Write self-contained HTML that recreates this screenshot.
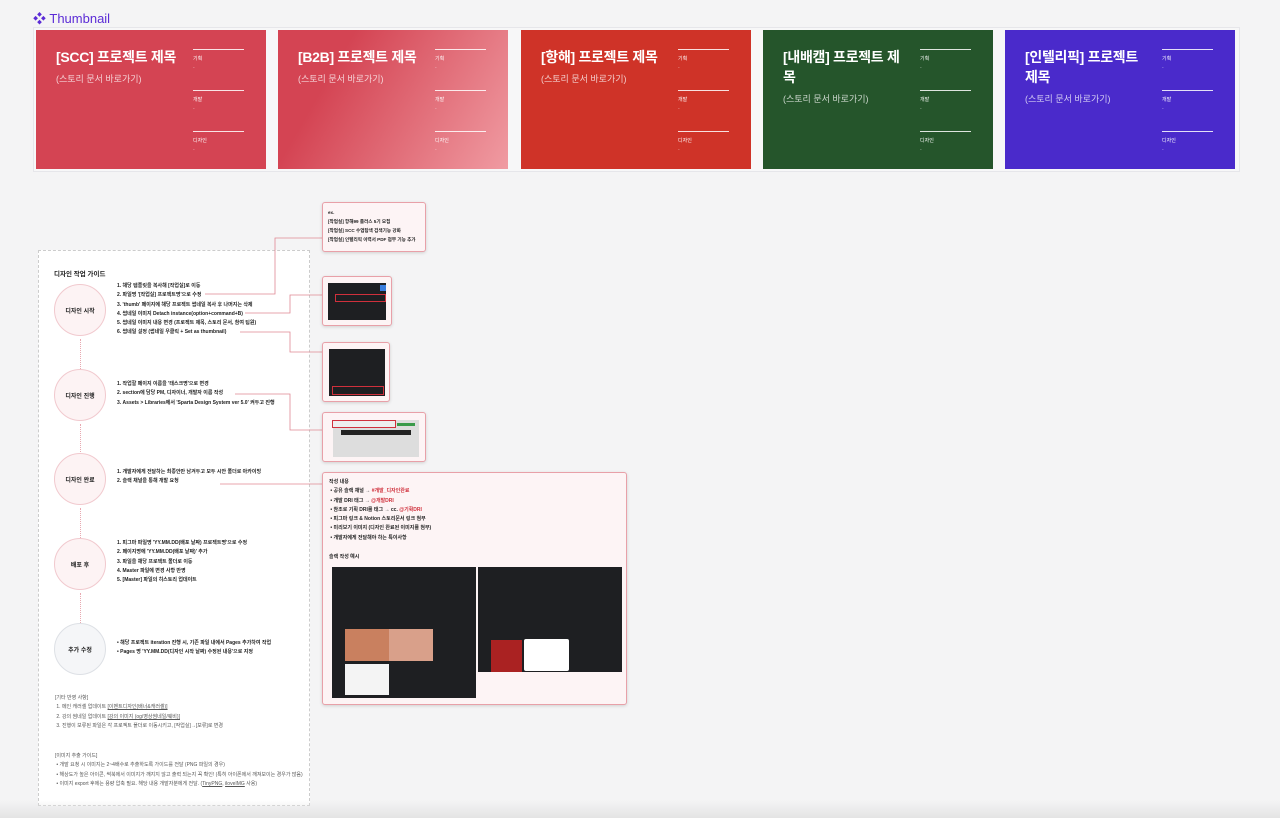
<!DOCTYPE html>
<html><head><meta charset="utf-8"><style>
*{margin:0;padding:0;box-sizing:border-box}
body{width:1280px;height:818px;background:#f4f4f5;font-family:"Liberation Sans","Noto Sans CJK KR",sans-serif;position:relative;overflow:hidden;color:#222}
.abs{position:absolute}
.hdr{left:33px;top:8px;font-size:13px;color:#5b2bd6}
.wrap{left:33px;top:27px;width:1207px;height:145px;background:#f7f7f8;border:1px solid #e6e6ea}
.card{position:absolute;top:30px;width:230px;height:139px;color:#fff}
.card .t{position:absolute;left:20px;top:17px;white-space:nowrap;font-size:14px;font-weight:bold;line-height:20px;letter-spacing:-0.3px}
.card .s{position:absolute;left:20px;font-size:9px;color:rgba(255,255,255,.75)}
.card .r{position:absolute;left:157px;width:51px;border-top:1px solid rgba(255,255,255,.85);font-size:5px;padding-top:5px}
.card .r i{display:block;font-style:normal;opacity:.6;margin-top:3px}
.guide{left:38px;top:250px;width:272px;height:556px;background:#fff;border:1px dashed #ccc}
.circ{position:absolute;left:15px;width:52px;height:52px;border-radius:50%;background:#fdf3f4;border:1px solid #f1c9ce;font-size:6px;font-weight:bold;display:flex;align-items:center;justify-content:center}
.vd{position:absolute;left:41px;width:0;height:32px;border-left:1px dotted #e8a8b0}
.list{position:absolute;left:78px;font-size:5px;font-weight:bold;line-height:9.3px}
.note{position:absolute;left:16px;font-size:5px;color:#555;line-height:9.3px}
.box{position:absolute;background:#fdf4f5;border:1px solid #e8a0a8;border-radius:3px;box-shadow:0 1px 3px rgba(0,0,0,.15)}
.dark{position:absolute;background:#1e1f22}
.fade{left:0;top:800px;width:1280px;height:18px;background:linear-gradient(#f4f4f500,#e4e4e4)}
</style></head><body>
<div class="abs hdr">❖ Thumbnail</div>
<div class="abs wrap"></div>

<div class="card" style="left:36px;background:#d44453"><div class="t">[SCC] 프로젝트 제목</div><div class="s" style="top:42px">(스토리 문서 바로가기)</div>
<div class="r" style="top:19px">기획<i>-</i></div><div class="r" style="top:60px">개발<i>-</i></div><div class="r" style="top:101px">디자인<i>-</i></div></div>
<div class="card" style="left:278px;background:linear-gradient(120deg,#d44453 25%,#f09ba2)"><div class="t">[B2B] 프로젝트 제목</div><div class="s" style="top:42px">(스토리 문서 바로가기)</div>
<div class="r" style="top:19px">기획<i>-</i></div><div class="r" style="top:60px">개발<i>-</i></div><div class="r" style="top:101px">디자인<i>-</i></div></div>
<div class="card" style="left:521px;background:#cf3328"><div class="t">[항해] 프로젝트 제목</div><div class="s" style="top:42px">(스토리 문서 바로가기)</div>
<div class="r" style="top:19px">기획<i>-</i></div><div class="r" style="top:60px">개발<i>-</i></div><div class="r" style="top:101px">디자인<i>-</i></div></div>
<div class="card" style="left:763px;background:#25552b"><div class="t">[내배캠] 프로젝트 제<br>목</div><div class="s" style="top:62px">(스토리 문서 바로가기)</div>
<div class="r" style="top:19px">기획<i>-</i></div><div class="r" style="top:60px">개발<i>-</i></div><div class="r" style="top:101px">디자인<i>-</i></div></div>
<div class="card" style="left:1005px;background:#4a2acb"><div class="t">[인텔리픽] 프로젝트<br>제목</div><div class="s" style="top:62px">(스토리 문서 바로가기)</div>
<div class="r" style="top:19px">기획<i>-</i></div><div class="r" style="top:60px">개발<i>-</i></div><div class="r" style="top:101px">디자인<i>-</i></div></div>

<div class="abs guide">
<div style="position:absolute;left:15px;top:17px;font-size:6.5px;font-weight:bold">디자인 작업 가이드</div>
<div class="circ" style="top:33px">디자인 시작</div>
<div class="vd" style="top:88px"></div>
<div class="circ" style="top:118px">디자인 진행</div>
<div class="vd" style="top:173px"></div>
<div class="circ" style="top:202px">디자인 완료</div>
<div class="vd" style="top:257px"></div>
<div class="circ" style="top:287px">배포 후</div>
<div class="vd" style="top:342px"></div>
<div class="circ" style="top:372px;background:#f5f6f8;border-color:#dde0e5">추가 수정</div>
<div class="list" style="top:31px">1. 해당 템플릿을 복사해 [작업실]로 이동<br>2. 파일명 '[작업실] 프로젝트명'으로 수정<br>3. 'thumb' 페이지에 해당 프로젝트 썸네일 복사 후 나머지는 삭제<br>4. 썸네일 이미지 Detach instance(option+command+B)<br>5. 썸네일 이미지 내용 변경 (프로젝트 제목, 스토리 문서, 참여 팀원)<br>6. 썸네일 설정 (썸네일 우클릭 + Set as thumbnail)</div>
<div class="list" style="top:129px">1. 작업할 페이지 이름을 '태스크명'으로 변경<br>2. section에 담당 PM, 디자이너, 개발자 이름 작성<br>3. Assets &gt; Libraries에서 'Sparta Design System ver 5.0' 켜두고 진행</div>
<div class="list" style="top:217px">1. 개발자에게 전달하는 최종안만 남겨두고 모두 시안 폴더로 아카이빙<br>2. 슬랙 채널을 통해 개발 요청</div>
<div class="list" style="top:288px">1. 피그마 파일명 'YY.MM.DD(배포 날짜) 프로젝트명'으로 수정<br>2. 페이지명에 'YY.MM.DD(배포 날짜)' 추가<br>3. 파일을 해당 프로젝트 폴더로 이동<br>4. Master 파일에 변경 사항 반영<br>5. [Master] 파일의 히스토리 업데이트</div>
<div class="list" style="top:388px">• 해당 프로젝트 iteration 진행 시, 기존 파일 내에서 Pages 추가하여 작업<br>• Pages 명 'YY.MM.DD(디자인 시작 날짜) 수정된 내용'으로 지정</div>
<div class="note" style="top:443px">[기타 반영 사항]<br>&nbsp;1. 메인 캐러셀 업데이트 <u>[이벤트디자인(배너&amp;캐러셀)]</u><br>&nbsp;2. 강의 썸네일 업데이트 <u>[강의 이미지 (og/영상썸네일/웨비)]</u><br>&nbsp;3. 진행이 보류된 파일은 각 프로젝트 폴더로 이동시키고, [작업실]→[보류]로 변경</div>
<div class="note" style="top:501px">[이미지 추출 가이드]<br>&nbsp;• 개발 요청 시 이미지는 2~4배수로 추출하도록 가이드를 전달 (PNG 파일의 경우)<br>&nbsp;• 해상도가 높은 아이콘, 썩북에서 이미지가 깨지지 않고 출력 되는지 꼭 확인! (특히 아이폰에서 깨져보이는 경우가 많음)<br>&nbsp;• 이미지 export 후에는 용량 압축 필요. 해당 내용 개발자분에게 전달. (<u>TinyPNG</u>, <u>iloveIMG</u> 사용)</div>
</div>

<svg class="abs" style="left:0;top:0" width="1280" height="818"><g fill="none" stroke="#e08893" stroke-width="0.8">
<path d="M205 294H275V238H322"/>
<path d="M245 313H290V295H322"/>
<path d="M240 332H290V352H322"/>
<path d="M235 394H290V430H322"/>
<path d="M220 484H322"/>
</g></svg>

<div class="box" style="left:322px;top:202px;width:104px;height:50px;font-size:4.6px;font-weight:bold;line-height:9px;padding:5px 5px;white-space:nowrap;overflow:hidden">ex.<br>[작업실] 항해99 플러스 5기 모집<br>[작업실] SCC 수업탐색 검색기능 강화<br>[작업실] 인텔리픽 이력서 PDF 첨부 기능 추가</div>
<div class="box" style="left:322px;top:276px;width:70px;height:50px"><div class="dark" style="left:5px;top:6px;width:58px;height:37px"></div><div class="abs" style="left:12px;top:17px;width:51px;height:8px;border:1px solid #d0303c"></div><div class="abs" style="left:57px;top:8px;width:6px;height:6px;background:#3b7ddd"></div></div>
<div class="box" style="left:322px;top:342px;width:68px;height:60px"><div class="dark" style="left:6px;top:6px;width:56px;height:47px"></div><div class="abs" style="left:9px;top:43px;width:52px;height:9px;border:1px solid #d0303c"></div></div>
<div class="box" style="left:322px;top:412px;width:104px;height:50px"><div class="abs" style="left:10px;top:7px;width:86px;height:37px;background:#ddd"></div><div class="abs" style="left:18px;top:17px;width:70px;height:5px;background:#222"></div><div class="abs" style="left:9px;top:7px;width:64px;height:8px;border:1px solid #d0303c;background:#eee"></div><div class="abs" style="left:74px;top:10px;width:18px;height:3px;background:#3a9a4a"></div></div>
<div class="box" style="left:322px;top:472px;width:305px;height:233px">
<div style="position:absolute;left:6px;top:5px;font-size:5px;font-weight:bold;line-height:9.3px">작성 내용<br>&nbsp;• 공유 슬랙 채널 → <span style="color:#d0303c">#개발_디자인완료</span><br>&nbsp;• 개발 DRI 태그 → <span style="color:#d0303c">@개발DRI</span><br>&nbsp;• 참조로 기획 DRI를 태그 → cc. <span style="color:#d0303c">@기획DRI</span><br>&nbsp;• 피그마 링크 &amp; Notion 스토리문서 링크 첨부<br>&nbsp;• 미리보기 이미지 (디자인 완료된 이미지를 첨부)<br>&nbsp;• 개발자에게 전달해야 하는 특이사항</div>
<div style="position:absolute;left:6px;top:80px;font-size:5px;font-weight:bold">슬랙 작성 예시</div>
<div class="dark" style="left:9px;top:94px;width:144px;height:131px"><div class="abs" style="left:13px;top:62px;width:44px;height:32px;background:#c9805f"></div><div class="abs" style="left:57px;top:62px;width:44px;height:32px;background:#d9a08a"></div><div class="abs" style="left:13px;top:97px;width:44px;height:31px;background:#f4f4f4"></div></div>
<div class="dark" style="left:155px;top:94px;width:144px;height:105px"><div class="abs" style="left:13px;top:73px;width:31px;height:32px;background:#a22;"></div><div class="abs" style="left:46px;top:72px;width:45px;height:32px;background:#fff;border-radius:2px"></div></div>
</div>
<div class="abs fade"></div>
</body></html>
